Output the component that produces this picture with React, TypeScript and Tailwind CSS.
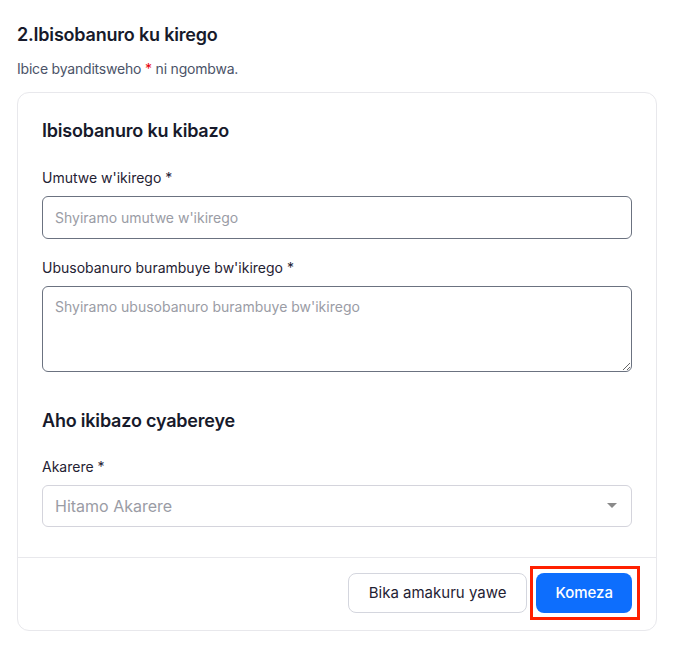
function Label({ children }: { children: React.ReactNode }) {
  return (
    <label className="block text-[14px] leading-5 text-[#1f2233] mb-2">
      {children} *
    </label>
  );
}

export default function App() {
  return (
    <div
      className="min-h-[649px] w-[675px] bg-white px-[17px] pt-[23px]"
      style={{ fontFamily: "Inter, 'Noto Sans', sans-serif" }}
    >
      <h2 className="text-[18px] leading-6 font-semibold text-[#171a2b] tracking-[-0.2px]">
        2.Ibisobanuro ku kirego
      </h2>
      <p className="mt-[12px] text-[14px] leading-5 text-[#4b5368] tracking-[-0.2px]">
        Ibice byanditsweho <span className="text-red-600">*</span> ni ngombwa.
      </p>

      <div className="mt-[13px] w-[640px] rounded-xl border border-[#e8e8ec] bg-white">
        <div className="px-6 pt-[26px] pb-[30px]">
          <h3 className="text-[18px] leading-6 font-semibold text-[#171a2b] tracking-[-0.2px]">
            Ibisobanuro ku kibazo
          </h3>

          <div className="mt-[25px]">
            <Label>Umutwe w'ikirego</Label>
            <input
              type="text"
              placeholder="Shyiramo umutwe w'ikirego"
              className="block w-full h-[43px] rounded-md border border-[#6b7280] px-3 text-[14px] placeholder:text-[#9a9ca5] outline-none"
            />
          </div>

          <div className="mt-[19px]">
            <Label>Ubusobanuro burambuye bw'ikirego</Label>
            <textarea
              placeholder="Shyiramo ubusobanuro burambuye bw'ikirego"
              className="block w-full h-[86px] rounded-md border border-[#6b7280] px-3 py-[9px] text-[14px] placeholder:text-[#9a9ca5] outline-none"
            />
          </div>

          <h3 className="mt-[37px] text-[18px] leading-6 font-semibold text-[#171a2b] tracking-[-0.2px]">
            Aho ikibazo cyabereye
          </h3>

          <div className="mt-[24px]">
            <Label>Akarere</Label>
            <div className="mt-px flex h-[42px] w-full items-center justify-between rounded-md border border-[#d4d4dc] pl-3 pr-[14px]">
              <span className="text-[16px] text-[#9a9ca5]">Hitamo Akarere</span>
              <svg width="10" height="6" viewBox="0 0 10 6" className="text-[#8a8a8a]">
                <path d="M0 0h10L5 5z" fill="currentColor" />
              </svg>
            </div>
          </div>
        </div>

        <div className="flex items-center justify-end gap-[9px] border-t border-[#e8e8ec] px-6 pt-[15px] pb-[17px]">
          <button className="h-10 rounded-lg border border-[#d4d6de] px-[20px] text-[15px] text-[#1f2233]">
            Bika amakuru yawe
          </button>
          <div className="-my-[7px] -mr-[8px] -ml-[6px] border-[3px] border-[#ff2000] pt-[4px] pb-[4px] pl-[3px] pr-[5px]">
            <button className="h-10 rounded-lg bg-[#0d6efd] px-[19px] text-[15px] font-medium text-white">
              Komeza
            </button>
          </div>
        </div>
      </div>
    </div>
  );
}
